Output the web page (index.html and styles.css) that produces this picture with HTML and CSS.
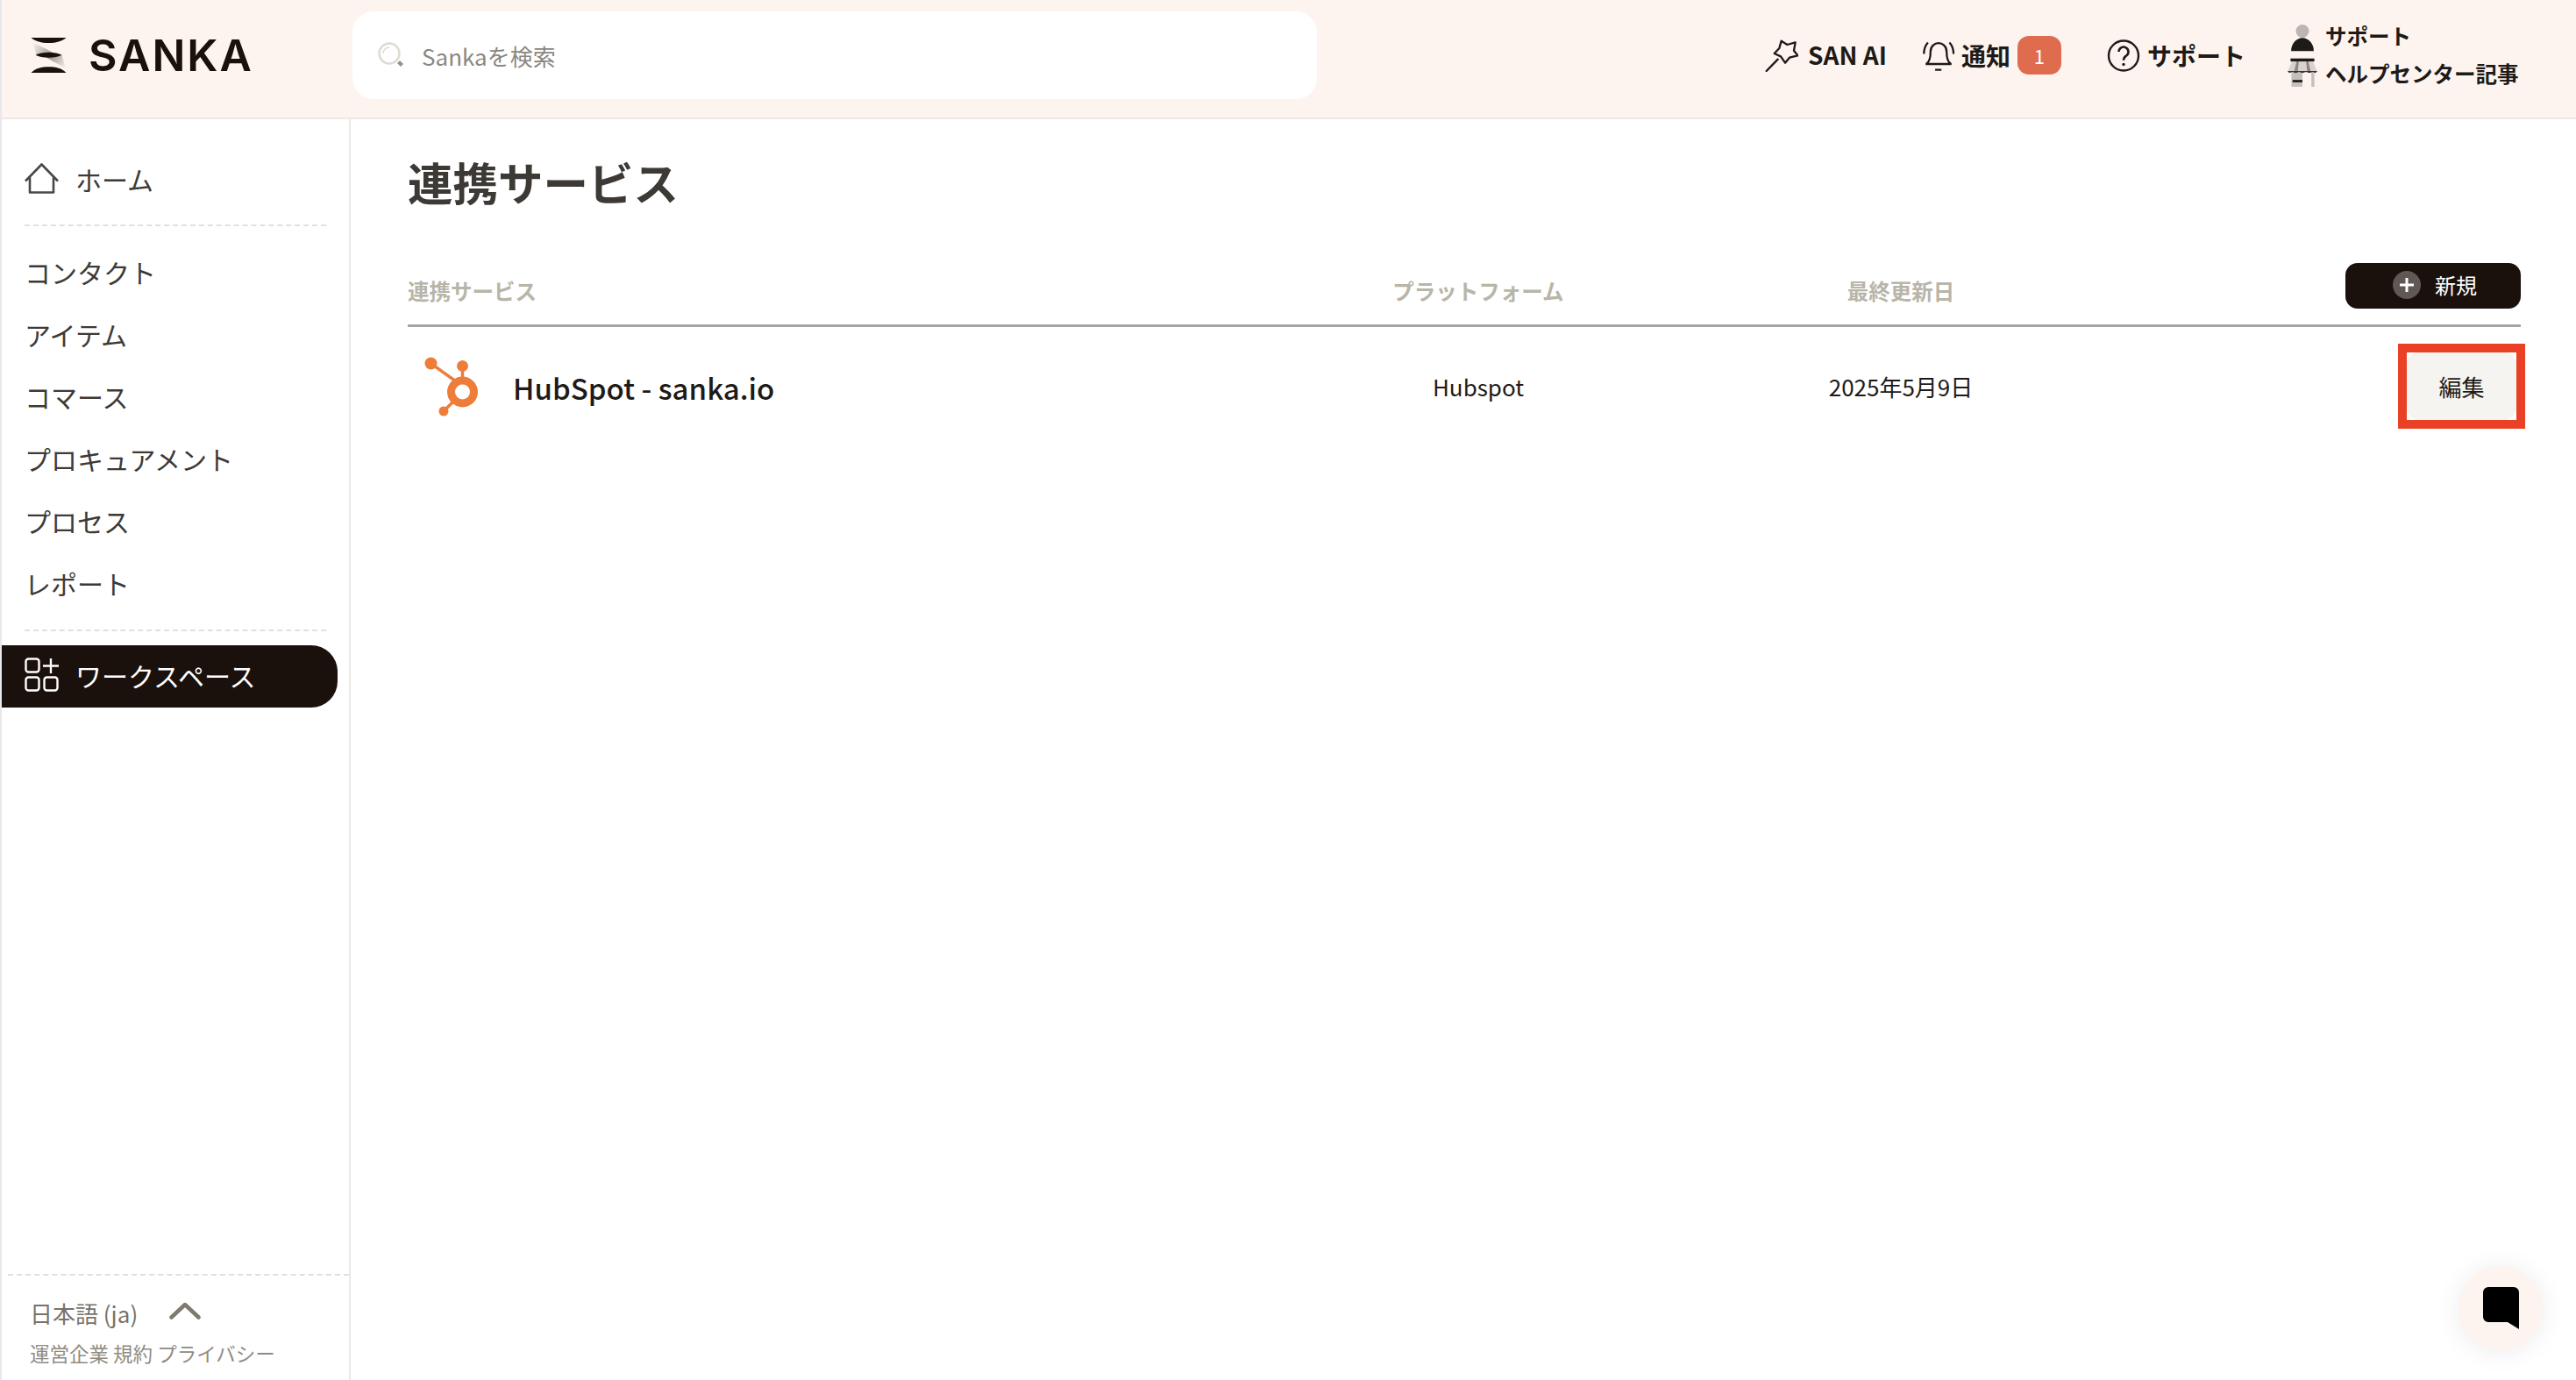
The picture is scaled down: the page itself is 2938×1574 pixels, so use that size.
FILE: index.html
```html
<!DOCTYPE html>
<html lang="ja">
<head>
<meta charset="utf-8">
<title>連携サービス - Sanka</title>
<link rel="stylesheet" href="styles.css">
</head>
<body>
<div class="app">
  <header class="topbar">
    <a class="brand">
      <svg class="brand-mark" viewBox="30 25 120 120">
        <defs>
          <linearGradient id="fa" gradientUnits="userSpaceOnUse" x1="38" y1="45" x2="100" y2="80"><stop offset="0" stop-color="#f6f1eb"/><stop offset="1" stop-color="#9d9891"/></linearGradient>
          <linearGradient id="fb" gradientUnits="userSpaceOnUse" x1="95" y1="88" x2="148" y2="128"><stop offset="0" stop-color="#9d9891"/><stop offset="1" stop-color="#f6f1eb"/></linearGradient>
        </defs>
        <path d="M35 40L105 76 48 84Z" fill="url(#fa)"/>
        <path d="M80 92L135 84 148 130Z" fill="url(#fb)"/>
        <path d="M30 25H150C135 38 115 43 90 43 65 43 45 38 30 25Z" fill="#1a100c"/>
        <path d="M45 84C65 72 115 72 135 84 115 96 65 96 45 84Z" fill="#1a100c"/>
        <path d="M30 145H150C135 130 115 125 90 125 65 125 45 130 30 145Z" fill="#1a100c"/>
      </svg>
      <span class="brand-name">SANKA</span>
    </a>
    <div class="search">
      <svg class="search-icon" viewBox="0 0 30 30">
        <circle cx="13" cy="13" r="11.500" fill="none" stroke="#dedbd5" stroke-width="2.500"/>
        <path d="M6 13a7 7 0 0 1 7-7" fill="none" stroke="#dedbd5" stroke-width="1.600"/>
        <path d="M22 24l3-3 4 4-3 3z" fill="#9b9183"/>
      </svg>
      <span class="search-text">Sankaを検索</span>
    </div>
    <nav class="tools">
      <a class="tool tool-ai">
        <svg class="tool-icon" viewBox="36 50 114 111"><path d="M41 158L80 118" fill="none" stroke="#1e1a17" stroke-width="7" stroke-linecap="round"/><path d="M92 55L112 68 140 60 135 88 148 105 120 112 105 130 90 108 68 98 85 80Z" fill="none" stroke="#1e1a17" stroke-width="7" stroke-linejoin="round"/></svg>
        <span>SAN AI</span>
      </a>
      <a class="tool tool-bell">
        <svg class="tool-icon" viewBox="576 50 116 112"><path d="M592 134c12-8 14-25 14-42 0-20 15-30 28-30s28 10 28 30c0 17 2 34 14 42" fill="none" stroke="#1e1a17" stroke-width="7" stroke-linejoin="round"/><path d="M589 135h90M622 155h22" stroke="#1e1a17" stroke-width="7"/><path d="M597 60c-9 10-14 24-14 40M672 60c9 10 14 24 14 40" fill="none" stroke="#1e1a17" stroke-width="7"/></svg>
        <span>通知</span>
        <span class="badge">1</span>
      </a>
      <a class="tool tool-help">
        <svg class="tool-icon" viewBox="0 0 37 37"><circle cx="18.500" cy="18.500" r="17" fill="none" stroke="#1e1a17" stroke-width="2.400"/><path d="M13 14a5.500 5.500 0 1 1 8.500 4.700c-2 1.300-3 2.300-3 5" fill="none" stroke="#1e1a17" stroke-width="2.600"/><circle cx="18.500" cy="28.500" r="1.700" fill="#1e1a17"/></svg>
        <span>サポート</span>
      </a>
      <div class="tool-stack">
        <a class="stack-link">
          <svg class="stack-icon stack-person" viewBox="55 20 100 94"><circle cx="105" cy="45" r="22" fill="#bdb5b2"/><path d="M67 112c0-25 18-44 38-44s38 19 38 44z" fill="#1e1a17"/></svg>
          <span>サポート</span>
        </a>
        <a class="stack-link">
          <svg class="stack-icon" viewBox="55 143 100 100"><path d="M70 155L55 190h100l-15-35z" fill="#d9d3cf"/><path d="M68 190h37v50H68z" fill="#c6bfbb"/><path d="M135 190h10v50h-10z" fill="#c6bfbb"/><path d="M85 155h8l-4 35h-12zM117 155h8l8 35h-12z" fill="#8f8783"/><path d="M65 145h80v10H65z" fill="#1e1a17"/><path d="M55 187h100l-6 7-9-4-12 4-11-4-12 4-11-4-12 4-11-4-10 4z" fill="#3a3330"/><path d="M72 217h33v8H72z" fill="#1e1a17"/></svg>
          <span>ヘルプセンター記事</span>
        </a>
      </div>
    </nav>
  </header>

  <div class="body">
    <aside class="sidebar">
      <div class="nav-group nav-home">
        <a class="nav-item">
          <svg class="nav-icon" viewBox="0 0 39 36"><path d="M1 21L19.500 2 38 21M6 17v17h27V17" fill="none" stroke="#4a4845" stroke-width="2.600" stroke-linejoin="round"/></svg>
          <span>ホーム</span>
        </a>
      </div>
      <div class="nav-group nav-main">
        <a class="nav-item">コンタクト</a>
        <a class="nav-item">アイテム</a>
        <a class="nav-item">コマース</a>
        <a class="nav-item">プロキュアメント</a>
        <a class="nav-item">プロセス</a>
        <a class="nav-item">レポート</a>
      </div>
      <a class="nav-item nav-active">
        <svg class="nav-icon" viewBox="0 0 39 39"><g fill="none" stroke="#fff" stroke-width="2.400"><rect x="1.500" y="1.500" width="15" height="15" rx="3"/><rect x="1.500" y="22.500" width="15" height="15" rx="3"/><rect x="22.500" y="22.500" width="15" height="15" rx="3"/><path d="M30 1v17M21 9.500h18"/></g></svg>
        <span>ワークスペース</span>
      </a>
      <div class="sidebar-foot">
        <div class="lang">
          <span>日本語 (ja)</span>
          <svg class="lang-chevron" viewBox="0 0 36 20"><path d="M2.500 17.500L18 3l15.500 14.500" fill="none" stroke="#7f7a70" stroke-width="4.500" stroke-linecap="round" stroke-linejoin="round"/></svg>
        </div>
        <div class="foot-links"><a>運営企業</a> <a>規約</a> <a>プライバシー</a></div>
      </div>
    </aside>

    <main class="content">
      <h1 class="page-title">連携サービス</h1>
      <div class="table">
        <div class="table-row table-head">
          <div class="col-name">連携サービス</div>
          <div class="col-center">プラットフォーム</div>
          <div class="col-center">最終更新日</div>
          <div class="col-action">
            <button class="btn-new">
              <svg class="btn-plus" viewBox="0 0 32 32"><circle cx="16" cy="16" r="16" fill="#5f5855"/><path d="M16 8v16M8 16h16" stroke="#fff" stroke-width="3"/></svg>
              <span class="btn-label">新規</span>
            </button>
          </div>
        </div>
        <div class="table-row table-item">
          <div class="col-name item-name">
            <svg class="hubspot" viewBox="0 0 62 68">
              <g fill="#ed7d3a">
                <circle cx="7.500" cy="7.500" r="7"/>
                <circle cx="43.500" cy="10.500" r="6.500"/>
                <circle cx="22" cy="62" r="5.500"/>
              </g>
              <g stroke="#ed7d3a" stroke-width="3.500"><path d="M7.500 7.500L36 28M43.500 10.500V28M22 62l14-14"/></g>
              <circle cx="43.500" cy="40" r="13" fill="#fff" stroke="#ed7d3a" stroke-width="9"/>
            </svg>
            <span class="item-title">HubSpot - sanka.io</span>
          </div>
          <div class="col-center item-cell">Hubspot</div>
          <div class="col-center item-cell">2025年5月9日</div>
          <div class="col-action">
            <div class="highlight"><button class="btn-edit">編集</button></div>
          </div>
        </div>
      </div>
    </main>
  </div>

  <button class="chat">
    <svg class="chat-icon" viewBox="0 0 41 48"><path d="M6 0h29a6 6 0 0 1 6 6v42l-13-8H6a6 6 0 0 1-6-6V6a6 6 0 0 1 6-6z" fill="#000"/></svg>
  </button>
</div>
</body>
</html>
```

FILE: styles.css
```css
* { box-sizing: border-box; }
html, body { margin: 0; height: 100%; }
body {
  font-family: "Noto Sans CJK JP", "Noto Sans", sans-serif;
  color: #3d3a36;
  background: #fff;
  overflow: hidden;
}
.app {
  height: 100vh;
  display: flex;
  flex-direction: column;
  border-left: 2px solid #e8e8ec;
  position: relative;
}
.topbar {
  height: 136px;
  flex: none;
  display: flex;
  align-items: center;
  padding-bottom: 8px;
  background: #fdf4ef;
  border-bottom: 2px solid #ebe9e8;
}
.brand {
  width: 400px;
  flex: none;
  display: flex;
  align-items: center;
  padding-left: 33px;
  gap: 25px;
}
.brand-mark { width: 41px; height: 40px; }
.brand-name {
  font-family: Inter, sans-serif;
  font-weight: 600;
  font-size: 50px;
  line-height: 1;
  letter-spacing: 2px;
  color: #1a100c;
}
.search {
  width: 1100px;
  height: 100px;
  flex: none;
  display: flex;
  align-items: center;
  gap: 20px;
  padding-left: 29px;
  background: #fff;
  border-radius: 24px;
}
.search-icon { width: 30px; height: 30px; }
.search-text { font-size: 26px; color: #8a8782; }
.tools {
  flex: 1;
  display: flex;
  align-items: center;
  padding-left: 511px;
}
.tool {
  display: flex;
  align-items: center;
  font-size: 28px;
  font-weight: 700;
  color: #1e1a17;
}
.tool-icon { width: 38px; height: 37px; flex: none; }
.tool-ai { gap: 11px; font-size: 28px; }
.tool-ai span { padding-bottom: 3px; }
.tool-bell { gap: 7px; margin-left: 40px; }
.badge {
  display: flex;
  align-items: center;
  justify-content: center;
  width: 50px;
  height: 44px;
  margin-left: 1px;
  border-radius: 13px;
  background: #e06c4f;
  color: #fff;
  font-size: 22px;
  font-weight: 400;
}
.tool-help { gap: 8px; margin-left: 52px; }
.tool-stack {
  margin-left: 48px;
  padding-bottom: 3px;
  display: flex;
  flex-direction: column;
  gap: 10px;
}
.stack-link {
  height: 33px;
  display: flex;
  align-items: center;
  gap: 9px;
  font-size: 24.500px;
  font-weight: 700;
  line-height: 33px;
  color: #1e1a17;
}
.stack-icon { width: 34px; height: 34px; flex: none; }
.stack-person { margin-top: 5px; }
.body {
  flex: 1;
  min-height: 0;
  display: flex;
}
.sidebar {
  width: 398px;
  flex: none;
  display: flex;
  flex-direction: column;
  border-right: 2px solid #ebe9e8;
  padding-top: 34px;
}
.nav-item {
  height: 71px;
  display: flex;
  align-items: center;
  gap: 19px;
  padding-bottom: 4px;
  font-size: 30px;
  color: #3d3a36;
}
.nav-icon { width: 39px; height: 39px; flex: none; }
.nav-group {
  margin: 0 26px;
  border-bottom: 2px dashed #e2e0dd;
}
.nav-home { padding-bottom: 15px; }
.nav-main { padding: 18px 0 16px; margin-bottom: 16px; }
.nav-active {
  width: 383px;
  padding-left: 26px;
  background: #1a100c;
  color: #fff;
  border-radius: 0 30px 30px 0;
}
.sidebar-foot {
  margin: auto 0 0 7px;
  padding: 24px 0 12px 25px;
  border-top: 2px dashed #e2e0dd;
  height: 121px;
}
.lang {
  display: flex;
  align-items: center;
  gap: 36px;
  font-size: 26px;
  line-height: 38px;
  color: #76726a;
}
.lang-chevron { width: 36px; height: 20px; margin-top: -6px; }
.foot-links {
  margin-top: 10px;
  font-size: 22.500px;
  line-height: 32px;
  color: #8f8b82;
}
.content {
  flex: 1;
  min-width: 0;
  padding: 0 63px 0 65px;
}
.page-title {
  margin: 0;
  padding-top: 36px;
  font-size: 51.500px;
  line-height: 70px;
  font-weight: 700;
  color: #3d3a36;
}
.table { margin-top: 55px; }
.table-row {
  display: grid;
  grid-template-columns: 1000px 442px 522px 1fr;
  align-items: center;
}
.table-head {
  height: 76px;
  padding-bottom: 16px;
  border-bottom: 3px solid #a5a5a5;
  font-size: 24.500px;
  font-weight: 700;
  color: #b8b5a9;
}
.table-head .col-name, .table-head .col-center { padding-top: 11px; }
.col-center { text-align: center; }
.col-action { display: flex; justify-content: flex-end; }
.btn-new {
  width: 200px;
  height: 52px;
  display: flex;
  align-items: center;
  justify-content: center;
  gap: 16px;
  padding: 0 0 0 4px;
  border: 0;
  border-radius: 14px;
  background: #1a100c;
  color: #fff;
  font: 400 24px "Noto Sans CJK JP", sans-serif;
}
.btn-plus { width: 32px; height: 32px; margin-bottom: 2px; }
.btn-label { padding-bottom: 2px; }
.table-item { padding-top: 19px; }
.item-name {
  display: flex;
  align-items: center;
  gap: 39px;
  padding-left: 19px;
  font-size: 33px;
  font-weight: 500;
  color: #1e1a17;
}
.item-title { padding-top: 2px; }
.hubspot { width: 62px; height: 68px; flex: none; }
.item-cell { font-size: 26px; color: #1e1a17; }
.highlight {
  margin-right: -5px;
  border: 10px solid #ea4026;
}
.btn-edit {
  display: block;
  width: 125px;
  height: 77px;
  padding: 0;
  border: 0;
  border-radius: 14px;
  background: #f5f4f0;
  color: #1e1a17;
  font: 400 26px "Noto Sans CJK JP", sans-serif;
}
.chat {
  position: absolute;
  left: 2802px;
  top: 1444px;
  width: 96px;
  height: 96px;
  padding: 0;
  border: 0;
  border-radius: 50%;
  background: #fdf4ef;
  box-shadow: 0 2px 30px rgba(0, 0, 0, 0.08);
  display: flex;
  align-items: center;
  justify-content: center;
}
.chat-icon { width: 41px; height: 48px; }
```
